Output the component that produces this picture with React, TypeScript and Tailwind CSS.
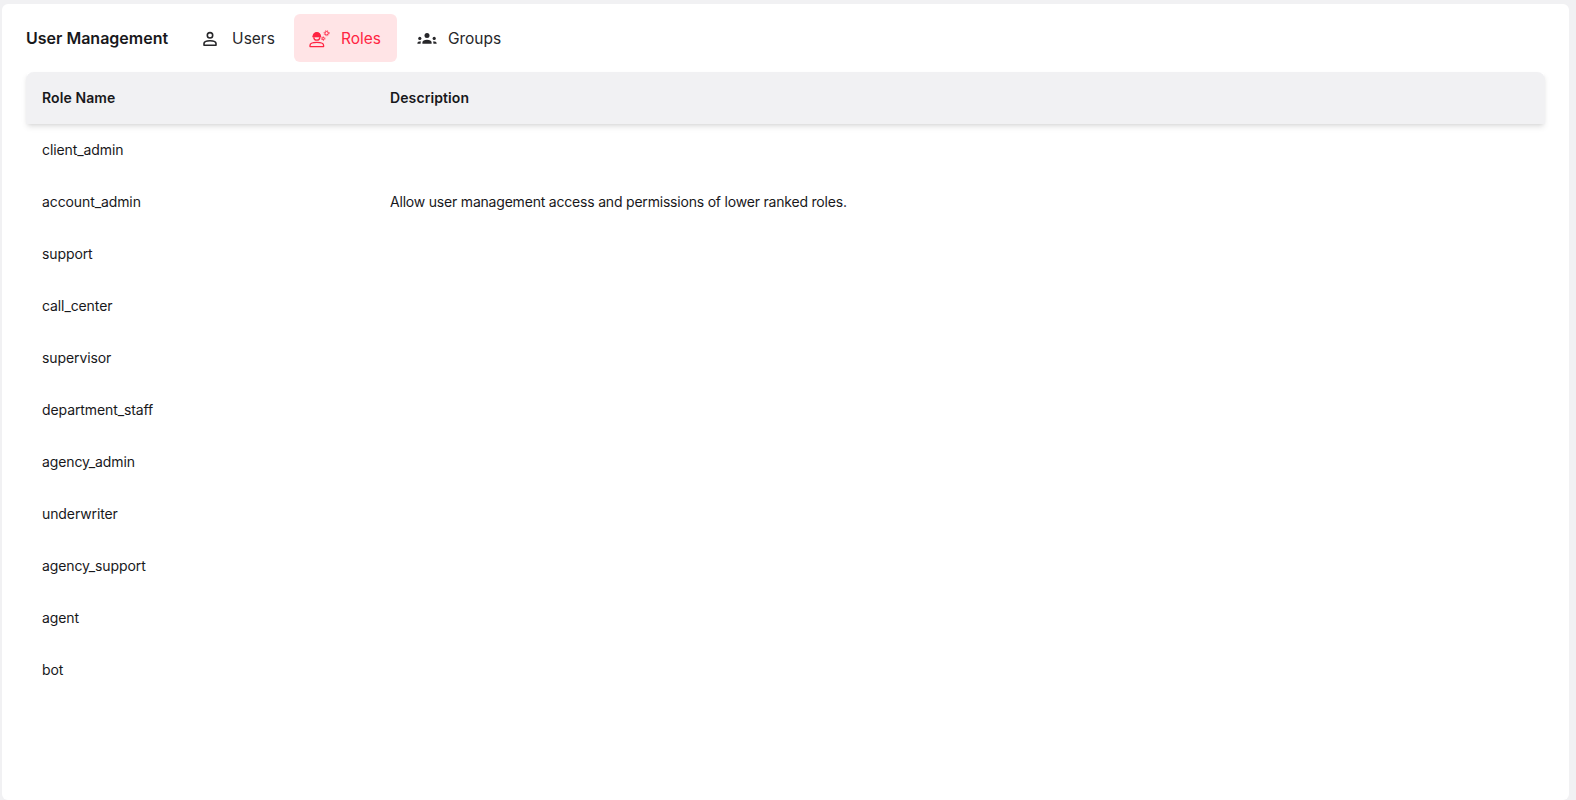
import React from 'react';

const roles: { name: string; description: string }[] = [
  { name: 'client_admin', description: '' },
  { name: 'account_admin', description: 'Allow user management access and permissions of lower ranked roles.' },
  { name: 'support', description: '' },
  { name: 'call_center', description: '' },
  { name: 'supervisor', description: '' },
  { name: 'department_staff', description: '' },
  { name: 'agency_admin', description: '' },
  { name: 'underwriter', description: '' },
  { name: 'agency_support', description: '' },
  { name: 'agent', description: '' },
  { name: 'bot', description: '' },
];

function UserIcon() {
  return (
    <svg width="16" height="16" viewBox="0 0 16 16" fill="none" stroke="currentColor" strokeWidth="1.6">
      <circle cx="8" cy="4.3" r="2.7" />
      <path d="M2 12.6c0-2 2.6-2.9 6-2.9s6 .9 6 2.9v1.6H2z" strokeLinejoin="round" />
    </svg>
  );
}

function RolesIcon() {
  return (
    <svg width="22" height="18" viewBox="0 0 22 18" fill="none" stroke="currentColor" strokeWidth="1.3">
      <path d="M4.2 6.2a3.6 3.6 0 0 1 7.2 0" fill="currentColor" />
      <path d="M3.4 6.6h8.8" strokeWidth="1.4" />
      <path d="M4.8 7.2a3 3 0 0 0 6 0" />
      <path d="M1 16.6v-1.2c0-2 2.9-3 6.8-3s6.8 1 6.8 3v1.2z" strokeLinejoin="round" />
      <circle cx="17.6" cy="3.2" r="1.7" strokeWidth="1" />
      <circle cx="17.6" cy="3.2" r="2.6" strokeWidth="0.8" strokeDasharray="1 1.1" />
      <circle cx="14.2" cy="8.6" r="1.1" strokeWidth="1" />
      <circle cx="14.2" cy="8.6" r="1.9" strokeWidth="0.7" strokeDasharray="0.9 1" />
    </svg>
  );
}

function GroupsIcon() {
  return (
    <svg width="20" height="14" viewBox="0 0 20 14" fill="currentColor">
      <circle cx="10" cy="3.6" r="2.5" />
      <path d="M5.4 11.8V10.4c0-1.7 2-2.6 4.6-2.6s4.6.9 4.6 2.6v1.4z" />
      <circle cx="2.8" cy="6.4" r="1.6" />
      <path d="M.4 11.8v-.8c0-1 1-1.6 2.4-1.6.5 0 .9.1 1.3.2-.3.4-.5.9-.5 1.4v.8z" />
      <circle cx="17.2" cy="6.4" r="1.6" />
      <path d="M19.6 11.8v-.8c0-1-1-1.6-2.4-1.6-.5 0-.9.1-1.3.2.3.4.5.9.5 1.4v.8z" />
    </svg>
  );
}

export default function App() {
  return (
    <div className="h-[800px] overflow-hidden bg-[#f1f1f3] pt-1 pr-[7px] pl-0.5 font-['Inter',sans-serif] text-[#18181b]">
      <div className="h-[796px] rounded-md bg-white px-6 pt-2.5">
        <div className="flex h-[48px] items-center">
          <h1 className="mr-[18px] text-base font-semibold">User Management</h1>
          <button className="flex h-[48px] items-center gap-3.5 pt-[2px] pr-[19px] pl-4 text-[15.5px] text-[#27272a]">
            <UserIcon />
            Users
          </button>
          <button className="flex h-[48px] items-center gap-2.5 rounded-md bg-[#ffe4e6] pt-[2px] pr-4 pl-[15px] text-[15.5px] text-[#ff2442]">
            <RolesIcon />
            Roles
          </button>
          <button className="flex h-[48px] items-center gap-[11px] pt-[2px] pr-4 pl-5 text-[15.5px] text-[#27272a]">
            <GroupsIcon />
            Groups
          </button>
        </div>
        <table className="mt-2.5 w-full table-fixed border-collapse text-sm">
          <thead>
            <tr className="h-[52px] bg-[#f1f1f3] shadow-md">
              <th className="w-[364px] rounded-tl-lg pl-4 text-left font-semibold tracking-[0.1px]">Role Name</th>
              <th className="rounded-tr-lg text-left font-semibold tracking-[0.1px]">Description</th>
            </tr>
          </thead>
          <tbody>
            {roles.map((r) => (
              <tr key={r.name} className="h-[52px]">
                <td className="pl-4 tracking-[-0.1px]">{r.name}</td>
                <td className="tracking-[-0.2px]">{r.description}</td>
              </tr>
            ))}
          </tbody>
        </table>
      </div>
    </div>
  );
}
